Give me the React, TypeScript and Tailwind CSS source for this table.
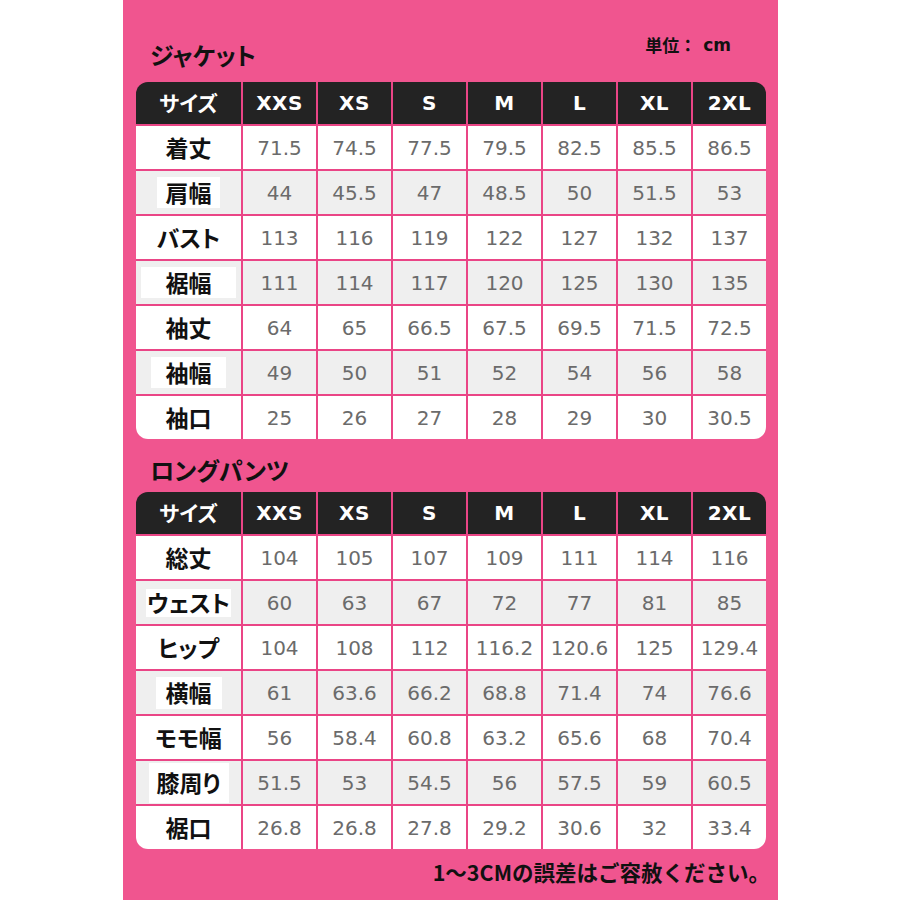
import React from "react";

type Row = { label: string; box?: [number, number]; values: string[] };

const sizes = ["XXS", "XS", "S", "M", "L", "XL", "2XL"];

const jacket: Row[] = [
  { label: "着丈", values: ["71.5", "74.5", "77.5", "79.5", "82.5", "85.5", "86.5"] },
  { label: "肩幅", box: [63, 31], values: ["44", "45.5", "47", "48.5", "50", "51.5", "53"] },
  { label: "バスト", values: ["113", "116", "119", "122", "127", "132", "137"] },
  { label: "裾幅", box: [95, 31], values: ["111", "114", "117", "120", "125", "130", "135"] },
  { label: "袖丈", values: ["64", "65", "66.5", "67.5", "69.5", "71.5", "72.5"] },
  { label: "袖幅", box: [75, 31], values: ["49", "50", "51", "52", "54", "56", "58"] },
  { label: "袖口", values: ["25", "26", "27", "28", "29", "30", "30.5"] },
];

const pants: Row[] = [
  { label: "総丈", values: ["104", "105", "107", "109", "111", "114", "116"] },
  { label: "ウェスト", box: [85, 28], values: ["60", "63", "67", "72", "77", "81", "85"] },
  { label: "ヒップ", values: ["104", "108", "112", "116.2", "120.6", "125", "129.4"] },
  { label: "横幅", box: [66, 32], values: ["61", "63.6", "66.2", "68.8", "71.4", "74", "76.6"] },
  { label: "モモ幅", values: ["56", "58.4", "60.8", "63.2", "65.6", "68", "70.4"] },
  { label: "膝周り", box: [80, 40], values: ["51.5", "53", "54.5", "56", "57.5", "59", "60.5"] },
  { label: "裾口", values: ["26.8", "26.8", "27.8", "29.2", "30.6", "32", "33.4"] },
];

const cjk = "font-['Noto_Sans_CJK_JP',sans-serif] font-bold";
const jp = `${cjk} [font-feature-settings:'palt']`;
const num = "font-['DejaVu_Sans',sans-serif]";

function SizeTable({ rows }: { rows: Row[] }) {
  return (
    <div className="grid w-[630px] grid-cols-[105px_repeat(7,73px)] gap-[2px] overflow-hidden rounded-[12px] bg-[#ea4586]">
      <div className={`flex h-[42px] items-center justify-center bg-[#232323] text-[21px] text-white ${jp}`}>
        サイズ
      </div>
      {sizes.map((s) => (
        <div
          key={s}
          className={`flex h-[42px] items-center justify-center bg-[#232323] text-[20px] font-bold tracking-[0.5px] text-white ${num}`}
        >
          {s}
        </div>
      ))}
      {rows.map((r, i) => {
        const gray = i % 2 === 1;
        const bg = gray ? "bg-[#efefef]" : "bg-white";
        return (
          <React.Fragment key={r.label}>
            <div className={`flex h-[43px] items-center justify-center ${bg}`}>
              {r.box ? (
                <span
                  className={`flex items-center justify-center bg-white text-[23px] text-[#111] ${jp}`}
                  style={{ width: r.box[0], height: r.box[1] }}
                >
                  {r.label}
                </span>
              ) : (
                <span className={`text-[23px] text-[#111] ${jp}`}>{r.label}</span>
              )}
            </div>
            {r.values.map((v, j) => (
              <div
                key={j}
                className={`flex h-[43px] items-center justify-center text-[20px] text-[#6b6b6b] ${num} ${bg}`}
              >
                {v}
              </div>
            ))}
          </React.Fragment>
        );
      })}
    </div>
  );
}

export default function App() {
  return (
    <div className="flex h-[900px] w-[900px] bg-white">
      <div className="ml-[123px] h-[900px] w-[655px] bg-[#f0558f] px-[13px] pt-[30px]">
        <div className="flex h-[52px] justify-between pr-[34px]">
          <div className={`mt-[9px] pl-[14px] text-[24px] leading-[32px] text-[#111] ${jp}`}>ジャケット</div>
          <div className="mt-[3px] flex h-[24px] items-center self-start text-[17px] leading-[24px] text-[#111]">
            <span className={cjk}>単位：</span>
            <span className={`ml-[7px] font-bold ${num}`}>cm</span>
          </div>
        </div>
        <SizeTable rows={jacket} />
        <div className={`mb-[6px] mt-[15px] pl-[14px] text-[24px] leading-[32px] text-[#111] ${jp}`}>
          ロングパンツ
        </div>
        <SizeTable rows={pants} />
        <div className={`-mr-[5px] mt-[9px] text-right text-[21.5px] leading-[28px] text-[#111] ${cjk}`}>
          1〜3CMの誤差はご容赦ください。
        </div>
      </div>
    </div>
  );
}
